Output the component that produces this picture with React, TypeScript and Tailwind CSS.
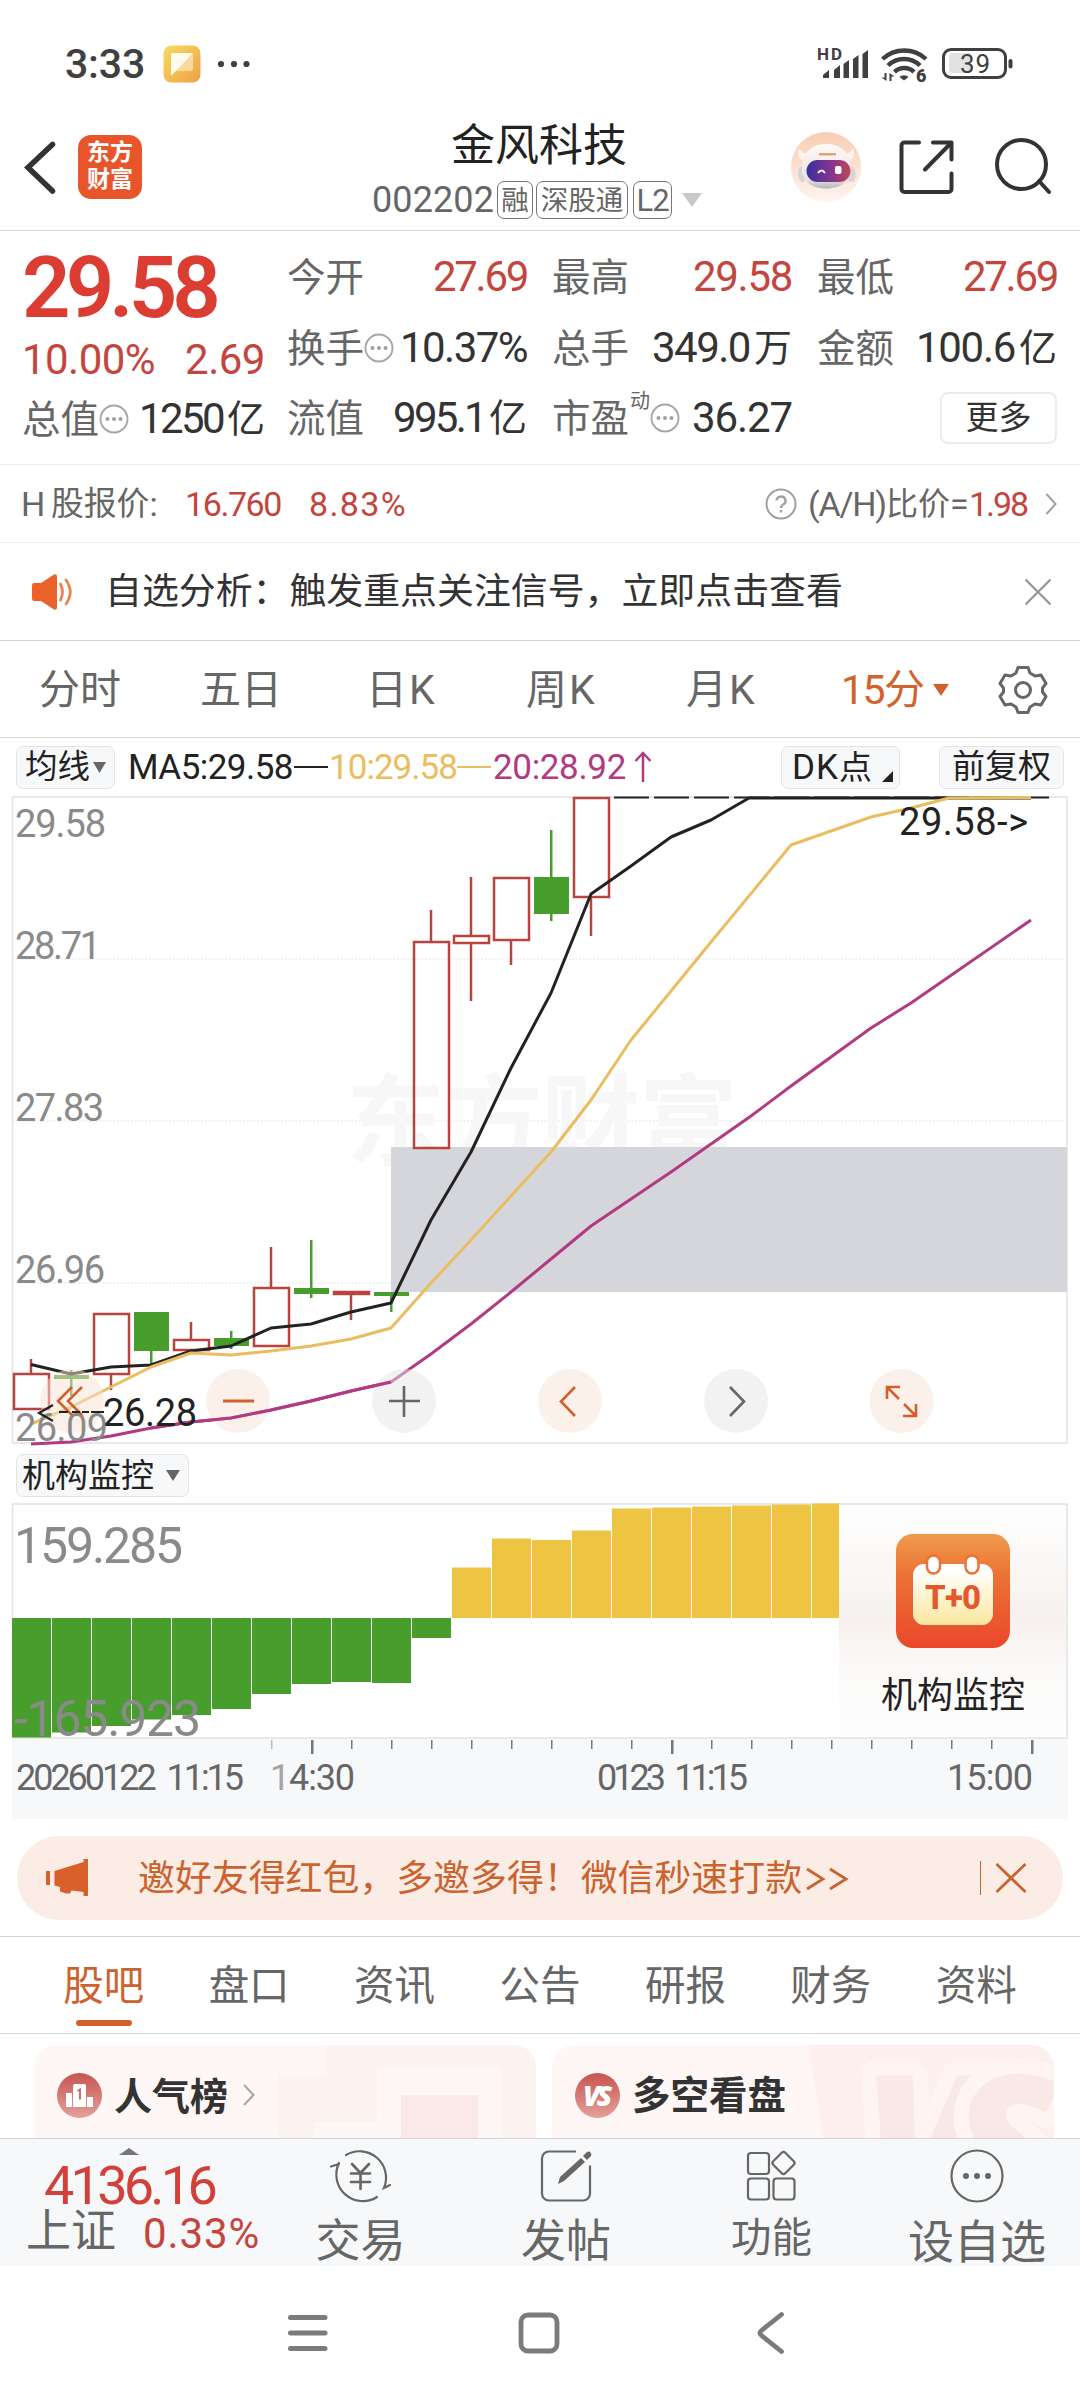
import { useLayoutEffect, useRef, useState } from "react";

type FitProps = {
    w: number,
    text: string,
    className?: string
}

// spreads or tightens the letters until the text is w pixels wide
const Fit = (props: FitProps) => {
    const ref = useRef<HTMLSpanElement>(null);
    const [spacing, setSpacing] = useState(0);

    useLayoutEffect(() => {
        if (!ref.current) return;
        const natural = ref.current.getBoundingClientRect().width;
        setSpacing((props.w - natural) / props.text.length);
    }, [])

    return (
        <span ref={ref} className={"inline-block whitespace-nowrap shrink-0 " + (props.className || "")}
            style={{ letterSpacing: spacing + "px" }}>{props.text}</span>
    );
}

type Candle = {
    x: number, high: number, top: number, bottom: number, low: number, up: boolean
}

const RED = "#b8433f";
const GREEN = "#489e2d";

const candles: Candle[] = [
    { x: 31, high: 1359, top: 1374, bottom: 1409, low: 1409, up: true },
    { x: 71, high: 1370, top: 1375, bottom: 1379, low: 1396, up: false },
    { x: 111, high: 1314, top: 1314, bottom: 1374, low: 1390, up: true },
    { x: 151, high: 1312, top: 1312, bottom: 1351, low: 1366, up: false },
    { x: 191, high: 1322, top: 1340, bottom: 1350, low: 1350, up: true },
    { x: 231, high: 1331, top: 1338, bottom: 1346, low: 1349, up: false },
    { x: 271, high: 1247, top: 1288, bottom: 1346, low: 1346, up: true },
    { x: 311, high: 1240, top: 1288, bottom: 1294, low: 1298, up: false },
    { x: 351, high: 1292, top: 1292, bottom: 1294, low: 1320, up: true },
    { x: 391, high: 1292, top: 1292, bottom: 1296, low: 1312, up: false },
    { x: 431, high: 910, top: 942, bottom: 1148, low: 1148, up: true },
    { x: 471, high: 877, top: 936, bottom: 943, low: 1001, up: true },
    { x: 511, high: 878, top: 878, bottom: 940, low: 965, up: true },
    { x: 551, high: 830, top: 877, bottom: 914, low: 921, up: false },
    { x: 591, high: 798, top: 798, bottom: 897, low: 936, up: true },
];

const ma5 = "31,1364.5 71,1374 111,1367 151,1365 191,1351 231,1346 271,1328 311,1324 351,1312 391,1303 431,1220 471,1152 511,1068 551,993 591,894 631,866 671,837 711,820 749,798 1031,798";
const ma10 = "31,1424 71,1407 111,1387 151,1367 191,1353 231,1355 271,1351 311,1346 351,1339 391,1328 431,1283 471,1240 511,1196 551,1152 591,1100 631,1040 711,942 791,845 871,817 911,808 949,798 1031,797.5";
const ma20 = "31,1444 71,1442 111,1436 151,1428 191,1422 231,1418 271,1410 311,1401 351,1391 391,1382 431,1354 471,1324 511,1292 551,1259 591,1226 671,1172 751,1116 791,1086 871,1028 911,1003 1031,920";

const greenBars = [1737.5, 1732.5, 1726, 1719.5, 1715, 1709, 1694, 1684, 1682, 1683, 1638];
const yellowBars = [1567.5, 1538.5, 1540, 1530.5, 1508.5, 1507.5, 1506.5, 1505.5, 1504.5, 1503.5];

const priceLabels = [
    { text: "29.58", y: 837, w: 89 },
    { text: "28.71", y: 959, w: 84 },
    { text: "27.83", y: 1121, w: 87 },
    { text: "26.96", y: 1283, w: 88 },
];

const More = () => (
    <svg width="30" height="30" viewBox="0 0 30 30" className="shrink-0" fill="none">
        <circle cx="15" cy="15" r="13.500" stroke="#a6a6a6" strokeWidth="1.900" />
        <circle cx="8.500" cy="15" r="2" fill="#a0a0a0" />
        <circle cx="15" cy="15" r="2" fill="#a0a0a0" />
        <circle cx="21.500" cy="15" r="2" fill="#a0a0a0" />
    </svg>
)

const StatusBar = () => (
    <div className="h-[100px] pt-[28px] pl-[65px] pr-[64px] flex">
        <div className="h-[72px] flex items-center">
            <Fit w={80} text="3:33" className="text-[41px] leading-none font-medium text-[#404040]" />
            <svg width="38" height="38" viewBox="0 0 38 38" className="ml-[18px]">
                <defs>
                    <linearGradient id="note" x1="0" y1="0" x2="1" y2="1">
                        <stop offset="0" stopColor="#f5dc60" />
                        <stop offset="1" stopColor="#f0a046" />
                    </linearGradient>
                </defs>
                <rect x="0.5" y="0.5" width="37" height="37" rx="8" fill="url(#note)" />
                <rect x="8" y="8" width="22" height="18" rx="2" fill="#f9d9a0" />
                <path d="M9 8h21L8 31V9z" fill="#fffaf0" />
            </svg>
            <svg width="34" height="10" viewBox="0 0 34 10" fill="#404040" className="ml-[15px]">
                <circle cx="5" cy="5" r="3.1" />
                <circle cx="18" cy="5" r="3.1" />
                <circle cx="30.5" cy="5" r="3.1" />
            </svg>
        </div>
        <svg width="200" height="40" viewBox="818 44 200 40" className="ml-auto mt-[16px]" fill="#404040">
            <text x="819" y="60" fontSize="17" fontWeight="700" textLength="25" fontFamily="Roboto">HD</text>
            <path d="M825 78v-3l6-5v8zM836 78v-8l6-5v13zM845.5 78v-14l5.500-4v18zM855 78v-19l5.500-4v23zM864.500 78v-24l5.500-4v28z" />
            <g fill="none" stroke="#404040" strokeWidth="4.400">
                <path d="M884.500 59a32 32 0 0 1 43.500 0" />
                <path d="M890 65.500a23 23 0 0 1 32 0" />
                <path d="M896.500 72a14 14 0 0 1 19.500 0" />
            </g>
            <path d="M901.500 77a6.500 6.500 0 0 1 9 0l-4.500 3.500z" />
            <path d="M888.500 73v8l-5-3.500h3v-4.500zM891.500 81v-8l5 3.500h-3v4.500z" />
            <text x="918" y="81.500" fontSize="18" fontWeight="900" fontFamily="Roboto">6</text>
            <rect x="945.500" y="49.500" width="62" height="28" rx="7.500" fill="none" stroke="#404040" strokeWidth="3" />
            <path d="M954 53h18v20h-18a3 3 0 0 1-3-3v-14a3 3 0 0 1 3-3z" fill="#e2e2e2" />
            <rect x="1010.500" y="59" width="4" height="9.500" rx="2" />
            <text x="962" y="73" fontSize="26" textLength="30" fontFamily="Roboto">39</text>
        </svg>
    </div>
)

const Header = () => (
    <header className="h-[131px] border-b border-[#d4d4d4] pl-[24px] flex">
        <svg width="34" height="60" viewBox="24 137 34 60" className="mt-[37px]" fill="none" stroke="#333" strokeWidth="5.500" strokeLinecap="round">
            <path d="M52.500 144.500L28 167.500l24.500 23.500" />
        </svg>
        <div className="ml-[20px] mt-[35px] w-[64px] h-[64px] rounded-[13px] bg-[#e9552a] text-white text-[23px] leading-[27px] font-bold text-center pt-[4px]">
            <div>东方</div>
            <div>财富</div>
        </div>
        <div className="ml-[230px] w-[334px]">
            <div className="h-[44px] mt-[24px] text-center text-[44px] leading-[44px] text-[#222]">金风科技</div>
            <div className="mt-[13px] h-[38px] flex items-center text-[#666]">
                <Fit w={122} text="002202" className="text-[36px] leading-none" />
                <div className="ml-[3px] w-[36px] h-[38px] border border-[#777] rounded-[7px] text-[27.500px] leading-[37px] flex justify-center">融</div>
                <div className="ml-[3px] w-[92px] h-[38px] border border-[#777] rounded-[7px] text-[27.500px] leading-[37px] flex justify-center whitespace-nowrap">深股通</div>
                <div className="ml-[5px] w-[39px] h-[38px] border border-[#777] rounded-[7px] text-[31px] leading-[37px] flex justify-center tracking-[-1px]">L2</div>
                <svg width="22" height="16" viewBox="0 0 22 16" className="ml-[9px]"><path d="M1 1h20l-10 14z" fill="#c9c9c9" /></svg>
            </div>
        </div>
        <svg width="72" height="72" viewBox="790 131 72 72" className="ml-[84px] mt-[31px]">
            <defs>
                <linearGradient id="face" x1="0" y1="0" x2="0" y2="1">
                    <stop offset="0" stopColor="#f8cdb2" />
                    <stop offset="1" stopColor="#fef5f0" />
                </linearGradient>
                <linearGradient id="visor" x1="0" y1="0" x2="1" y2="0">
                    <stop offset="0" stopColor="#3a2f9e" />
                    <stop offset="0.55" stopColor="#83358f" />
                    <stop offset="1" stopColor="#c44558" />
                </linearGradient>
                <linearGradient id="shell" x1="0" y1="0" x2="0" y2="1">
                    <stop offset="0" stopColor="#fffaf6" />
                    <stop offset="0.8" stopColor="#e9e4e4" />
                    <stop offset="1" stopColor="#b9b2b4" />
                </linearGradient>
            </defs>
            <circle cx="826" cy="167" r="35" fill="url(#face)" />
            <path d="M799 148q-3 9 3 12l9-6q-9 1-12-6zM853 148q3 9-3 12l-9-6q9 1 12-6z" fill="#fff4ee" />
            <ellipse cx="802.500" cy="174" rx="4.500" ry="8" fill="#d8d3d5" />
            <ellipse cx="851" cy="174" rx="4.500" ry="8" fill="#d8d3d5" />
            <path d="M826 144c14 0 21 7 24.500 18c4 18-9 26.500-24.500 26.500s-27-8.500-23.500-26.500c2.500-11 10-18 23.500-18z" fill="url(#shell)" />
            <rect x="806.500" y="160" width="44" height="22" rx="11" fill="url(#visor)" />
            <path d="M818 173q3.500-5 7 0" fill="none" stroke="#fff" strokeWidth="2" />
            <rect x="835" y="166" width="6.500" height="8" rx="2" fill="#fff" />
            <rect x="819" y="153" width="17" height="2.500" fill="#dba878" />
        </svg>
        <svg width="60" height="60" viewBox="898 137 60 60" className="ml-[35px] mt-[37px]" fill="none" stroke="#333" strokeWidth="4" strokeLinecap="round" strokeLinejoin="round">
            <path d="M920 142.500h-14.500a3 3 0 0 0-3 3v43.500a3 3 0 0 0 3 3h44a3 3 0 0 0 3-3v-15.500M934 142.500h18.500v17M951 144l-25 25.500" />
        </svg>
        <svg width="62" height="60" viewBox="994 137 62 60" className="ml-[36px] mt-[37px]" fill="none" stroke="#333" strokeWidth="4" strokeLinecap="round">
            <circle cx="1022.500" cy="164.500" r="24.500" />
            <path d="M1040 181l10 11" />
        </svg>
    </header>
)

const Label = ({ text }: { text: string }) => (
    <span className="relative top-[1px] text-[38.500px] leading-none text-[#666] shrink-0">{text}</span>
)

const Unit = ({ text }: { text: string }) => (
    <span className="text-[38px] leading-none ml-[4px]">{text}</span>
)

const Quote = () => (
    <section className="h-[234px] border-b border-[#ececec] flex">
        <div className="w-[265px] pl-[22px] pt-[15px]">
            <div className="h-[84px] flex items-center">
                <Fit w={194} text="29.58" className="text-[85px] leading-none font-semibold text-[#dc3d33]" />
            </div>
            <div className="h-[60px] flex items-center justify-between text-[42px] text-[#c4453e]">
                <Fit w={133} text="10.00%" className="leading-none" />
                <Fit w={80} text="2.69" className="leading-none" />
            </div>
            <div className="h-[58px] flex items-center justify-between">
                <div className="flex items-center"><Label text="总值" /><More /></div>
                <div className="flex items-center text-[#333]">
                    <Fit w={84} text="1250" className="text-[42px] leading-none" />
                    <Unit text="亿" />
                </div>
            </div>
        </div>
        <div className="ml-[22px] pt-[11px] grid grid-cols-[240px_240px_240px] gap-x-[25px] auto-rows-[70.500px] text-[42px]">
            <div className="flex items-center justify-between"><Label text="今开" /><Fit w={94} text="27.69" className="leading-none text-[#c4453e]" /></div>
            <div className="flex items-center justify-between"><Label text="最高" /><Fit w={99} text="29.58" className="leading-none text-[#c4453e]" /></div>
            <div className="flex items-center justify-between"><Label text="最低" /><Fit w={94} text="27.69" className="leading-none text-[#c4453e]" /></div>

            <div className="flex items-center justify-between">
                <div className="flex items-center"><Label text="换手" /><More /></div>
                <Fit w={127} text="10.37%" className="leading-none text-[#333]" />
            </div>
            <div className="flex items-center justify-between">
                <Label text="总手" />
                <div className="flex items-center text-[#333]"><Fit w={98} text="349.0" className="leading-none" /><Unit text="万" /></div>
            </div>
            <div className="flex items-center justify-between">
                <Label text="金额" />
                <div className="flex items-center text-[#333]"><Fit w={99} text="100.6" className="leading-none" /><Unit text="亿" /></div>
            </div>

            <div className="flex items-center justify-between">
                <Label text="流值" />
                <div className="flex items-center text-[#333]"><Fit w={92} text="995.1" className="leading-none" /><Unit text="亿" /></div>
            </div>
            <div className="flex items-center justify-between">
                <div className="flex items-center">
                    <Label text="市盈" />
                    <span className="text-[20px] leading-none mb-[34px] ml-[1px] text-[#666]">动</span>
                    <More />
                </div>
                <Fit w={100} text="36.27" className="leading-none text-[#333]" />
            </div>
            <div className="flex items-center justify-end">
                <div className="w-[117px] h-[52px] rounded-[8px] border-2 border-[#ebebee] text-[33px] leading-[47px] text-center text-[#333]">更多</div>
            </div>
        </div>
    </section>
)

const HShare = () => (
    <div className="h-[78px] border-b border-[#ececec] flex items-center pl-[21px] pr-[23px] text-[34px] leading-none text-[#666]">
        <div className="flex items-center w-[164px]"><Fit w={27} text="H" className="leading-none" /><span className="text-[32.800px] leading-none ml-[3px] mt-[1px]">股报价</span><span className="leading-none">:</span></div>
        <Fit w={96} text="16.760" className="leading-none text-[#c4453e]" />
        <Fit w={98} text="8.83%" className="leading-none text-[#c4453e] ml-[28px]" />
        <svg width="32" height="32" viewBox="0 0 32 32" fill="none" stroke="#a0a0a0" strokeWidth="2" className="ml-auto">
            <circle cx="16" cy="16" r="14.500" />
            <path d="M11.500 12.500a4.500 4.200 0 1 1 6.500 4q-2 1.200-2 3.500M16 22v2.500" strokeWidth="2.400" />
        </svg>
        <Fit w={78} text="(A/H)" className="leading-none ml-[11px]" />
        <span className="text-[32px] leading-none mt-[1px]">比价</span>
        <Fit w={18} text="=" className="leading-none" />
        <Fit w={58} text="1.98" className="leading-none text-[#c4453e] ml-[1px]" />
        <svg width="12" height="24" viewBox="0 0 12 24" fill="none" stroke="#a0a0a0" strokeWidth="2" className="ml-[18px]"><path d="M1.500 2l9 10l-9 10" /></svg>
    </div>
)

const Analysis = () => (
    <div className="h-[98px] border-b border-[#d4d4d4] flex items-center pl-[30px] pr-[28px]">
        <svg width="44" height="40" viewBox="30 571 44 40">
            <path d="M34 582h7l13-8.500q3-1 3 2v31q0 3-3 2l-13-8.500h-7q-2 0-2-3v-12q0-3 2-3z" fill="#ec622b" />
            <path d="M60.500 583q4 8 0 16M66 579q8.500 12 0 24" fill="none" stroke="#ef8152" strokeWidth="2.800" strokeLinecap="round" />
        </svg>
        <span className="ml-[31px] mt-[2px] text-[36.900px] leading-none text-[#333]">自选分析：触发重点关注信号，立即点击查看</span>
        <svg width="28" height="28" viewBox="0 0 28 28" fill="none" stroke="#999" strokeWidth="2.400" className="ml-auto"><path d="M1.500 1.500l25 25M26.500 1.500l-25 25" /></svg>
    </div>
)

const PeriodTabs = () => (
    <nav className="h-[97px] pt-[2px] border-b border-[#d4d4d4] flex items-center text-[41px] leading-none text-[#666]">
        <span className="ml-[39px] w-[161px]">分时</span>
        <span className="w-[166px]">五日</span>
        <span className="w-[160px] tracking-[2px]">日K</span>
        <span className="w-[160px] tracking-[2px]">周K</span>
        <span className="w-[155px] tracking-[2px]">月K</span>
        <span className="flex items-center text-[#d1632d]">
            <Fit w={43} text="15" className="leading-none" />分
            <svg width="16" height="12" viewBox="0 0 16 12" className="ml-[8px]"><path d="M0 0h16l-8 12z" fill="#d1602b" /></svg>
        </span>
        <svg width="52" height="54" viewBox="-26 -27 52 54" fill="none" stroke="#666" strokeWidth="3" strokeLinejoin="round" className="ml-auto mr-[31px]">
            <path d="M-5-22.500h10l2 5.500l5 3l6-1l5 8.500l-3.500 4.500v4l3.500 4.500l-5 8.500l-6-1l-5 3l-2 5.500h-10l-2-5.500l-5-3l-6 1l-5-8.500l3.500-4.500v-4l-3.500-4.500l5-8.500l6 1l5-3z" />
            <circle cx="0" cy="0" r="7.500" />
        </svg>
    </nav>
)

const MaRow = () => (
    <div className="h-[58px] flex items-center pl-[16px] pr-[16px] text-[35px] leading-none text-[#222]">
        <div className="w-[99px] h-[43px] rounded-[7px] border border-[#e3e4e8] bg-[#f7f8fa] flex items-center pl-[8px]">
            <span className="text-[32.500px] leading-none">均线</span>
            <svg width="13" height="11" viewBox="0 0 13 11" className="ml-[3px]"><path d="M0 0h13l-6.500 11z" fill="#666" /></svg>
        </div>
        <Fit w={165} text="MA5:29.58" className="leading-none ml-[13px]" />
        <div className="w-[34px] h-[2.500px] bg-[#222] ml-[1px]" />
        <Fit w={128} text="10:29.58" className="leading-none ml-[1px] text-[#e9bd60]" />
        <div className="w-[34px] h-[2.500px] bg-[#e9bd60]" />
        <Fit w={133} text="20:28.92" className="leading-none ml-[2px] text-[#b23a80]" />
        <svg width="18" height="32" viewBox="0 0 18 32" fill="none" stroke="#b23a80" strokeWidth="2.500" className="ml-[8px]"><path d="M9 31v-29M1.500 10l7.500-8l7.500 8" /></svg>
        <div className="ml-auto w-[119px] h-[43px] rounded-[7px] border border-[#e3e4e8] bg-[#f7f8fa] flex items-center pl-[10px]">
            <Fit w={47} text="DK" className="leading-none" /><span className="text-[33px] leading-none">点</span>
            <svg width="11" height="11" viewBox="0 0 11 11" className="ml-[10px] mt-[18px]"><path d="M11 0v11h-11z" fill="#222" /></svg>
        </div>
        <div className="ml-[39px] w-[125px] h-[43px] rounded-[7px] border border-[#e3e4e8] bg-[#f7f8fa] text-[33px] leading-[39px] text-center">前复权</div>
    </div>
)

const PriceChart = () => (
    <svg width="1080" height="650" viewBox="0 796 1080 650" className="block" fontFamily="Roboto, 'Noto Sans CJK SC', sans-serif">
        <g stroke="#e2e2e4" fill="none">
            <rect x="12.500" y="797" width="1054.500" height="646" strokeWidth="1.500" />
            <path d="M12 959h1055M12 1121h1055M12 1283h1055" stroke="#e4e4e4" strokeDasharray="2 1.500" />
        </g>
        <text x="346" y="1157" fontSize="99" fontWeight="700" fill="#f7f7f7" textLength="392">东方财富</text>
        <rect x="391" y="1147" width="676" height="145" fill="#d5d6db" />
        <g fontSize="38" fill="#8a8a8a">
            {priceLabels.map((l) => (
                <text key={l.text} x="15" y={l.y} textLength={l.w + 2}>{l.text}</text>
            ))}
        </g>
        {candles.map((c) => c.up ? (
            <g key={c.x} stroke={RED} strokeWidth="2.500" fill="none">
                <path d={`M${c.x} ${c.high}V${c.top}M${c.x} ${c.bottom}V${c.low}`} />
                <rect x={c.x - 17} y={c.top} width="35" height={c.bottom - c.top} />
            </g>
        ) : (
            <g key={c.x} fill={GREEN}>
                <rect x={c.x - 1} y={c.high} width="2.500" height={c.low - c.high} />
                <rect x={c.x - 17} y={c.top} width="35" height={c.bottom - c.top} />
            </g>
        ))}
        <path d="M614 797.500H1049" stroke="#222" strokeWidth="2" strokeDasharray="35 5" />
        <g fill="none" strokeWidth="3" strokeLinejoin="round">
            <polyline points={ma5} stroke="#222" />
            <polyline points={ma10} stroke="#e9bd60" />
            <polyline points={ma20} stroke="#b23a80" />
        </g>
        <text x="899" y="835" fontSize="38" fill="#222" textLength="129">29.58-&gt;</text>

        <g fill="#f9e3d6" fillOpacity="0.5">
            <circle cx="72" cy="1401" r="32" />
            <circle cx="238" cy="1401" r="32" />
            <circle cx="570" cy="1401" r="32" />
            <circle cx="901.500" cy="1401" r="32" />
        </g>
        <circle cx="404" cy="1401" r="32" fill="#e6e6e8" fillOpacity="0.5" />
        <circle cx="736" cy="1401" r="32" fill="#e6e6e8" fillOpacity="0.5" />
        <polyline points="151,1428 191,1422 231,1418 271,1410 311,1401 351,1391 391,1382" fill="none" stroke="#b23a80" strokeWidth="3" />
        <text x="15" y="1441" fontSize="38" fill="#8a8a8a" textLength="93">26.09</text>
        <g fill="none" stroke="#d1602b" strokeWidth="2.600">
            <path d="M72 1387l-14 14l14 14M82 1387l-14 14l14 14" />
            <path d="M223 1401h31" strokeWidth="3" />
            <path d="M575 1387l-14 14.500l14 14.500" />
            <path d="M887 1399v-12h13M888 1388l11 11M916 1404v12h-13M915 1415l-11-11" />
        </g>
        <g fill="none" stroke="#666" strokeWidth="2.600">
            <path d="M389 1401h31M404 1386v31" />
            <path d="M730 1387l14 14.500l-14 14.500" />
        </g>
        <path d="M53 1405l-14 8l14 8M59 1412h9M72 1412h8M82 1412h7M91 1412h13" fill="none" stroke="#222" strokeWidth="2.200" />
        <text x="103" y="1426" fontSize="38" fill="#222" textLength="94">26.28</text>
    </svg>
)

const MonitorButton = () => (
    <div className="h-[57px] pt-[8px] pl-[16px]">
        <div className="w-[173px] h-[43px] rounded-[7px] border border-[#e3e4e8] bg-[#f7f8fa] flex items-center pl-[5px] text-[33px] leading-none text-[#222]">
            <span className="leading-none">机构监控</span>
            <svg width="14" height="11" viewBox="0 0 14 11" className="ml-[12px]"><path d="M0 0h14l-7 11z" fill="#666" /></svg>
        </div>
    </div>
)

const MonitorChart = () => (
    <svg width="1080" height="318" viewBox="0 1503 1080 318" className="block" fontFamily="Roboto, 'Noto Sans CJK SC', sans-serif">
        <defs>
            <linearGradient id="tile" x1="0" y1="0" x2="0" y2="1">
                <stop offset="0" stopColor="#f09a4c" />
                <stop offset="0.35" stopColor="#ec7334" />
                <stop offset="1" stopColor="#ea472b" />
            </linearGradient>
            <linearGradient id="page" x1="0" y1="0" x2="0" y2="1">
                <stop offset="0.100" stopColor="#fff" />
                <stop offset="1" stopColor="#fbe79d" />
            </linearGradient>
            <linearGradient id="side" x1="0" y1="0" x2="0" y2="1">
                <stop offset="0" stopColor="#fff" />
                <stop offset="0.500" stopColor="#f6f1ee" />
                <stop offset="0.750" stopColor="#fcfbfa" />
                <stop offset="1" stopColor="#fdfdfd" />
            </linearGradient>
        </defs>
        <rect x="12" y="1739" width="1056" height="80" fill="#f7f8fa" />
        <rect x="839" y="1505" width="228" height="232" fill="url(#side)" />
        <rect x="12.500" y="1504" width="1054.500" height="234" fill="none" stroke="#e2e2e4" strokeWidth="1.500" />
        <g fill={GREEN}>
            {greenBars.map((b, i) => (
                <rect key={i} x={12 + i * 40} y="1618" width="39" height={b - 1618} />
            ))}
        </g>
        <g fill="#eec443">
            {yellowBars.map((b, i) => (
                <rect key={i} x={452 + i * 40} y={b} width={i == 9 ? 27 : 39} height={1618 - b} />
            ))}
        </g>
        <g fontSize="50" fill="#8a8a8a">
            <text x="14" y="1563" textLength="169">159.285</text>
            <text x="14" y="1736" textLength="187">-165.923</text>
        </g>
        {Array.from({ length: 20 }, (_, i) => 271 + i * 40).map((x) => (
            <rect key={x} x={x} y="1740" width={x == 311 || x == 671 || x == 1031 ? 2.5 : 1.5} height={x == 311 || x == 671 || x == 1031 ? 14 : 9} fill={x == 271 ? "#bbb" : "#777"} />
        ))}
        <g fontSize="36" fill="#666">
            <text x="16" y="1790" textLength="228" className="[word-spacing:7px]">20260122 11:15</text>
            <text x="270" y="1790" textLength="85"><tspan fill="#a4a4a4">1</tspan>4:30</text>
            <text x="597" y="1790" textLength="151" className="[word-spacing:7px]">0123 11:15</text>
            <text x="947" y="1790" textLength="86">15:00</text>
        </g>
        <rect x="896" y="1534" width="114" height="114" rx="17" fill="url(#tile)" />
        <rect x="913" y="1564" width="80" height="61" rx="11" fill="url(#page)" />
        <g fill="#fff" stroke="#ec7334" strokeWidth="2.500">
            <rect x="927" y="1555.500" width="13" height="18" rx="6.500" />
            <rect x="965.500" y="1555.500" width="13" height="18" rx="6.500" />
        </g>
        <text x="925" y="1609" fontSize="33" fontWeight="800" fill="#e2592d" textLength="56">T+0</text>
        <text x="881" y="1708" fontSize="36" fill="#222" textLength="144">机构监控</text>
    </svg>
)

const Banner = () => (
    <div className="mt-[15px] mx-[17px] h-[84px] rounded-[42px] bg-[#fbede5] flex items-center pl-[27px] pr-[36px] text-[#cb632f]">
        <svg width="46" height="40" viewBox="43 1858 46 40" fill="#d9602a">
            <path d="M45 1871h4v14h-4zM53.500 1871l29-9v-3h4.500v37h-4.500v-4l-12-1.500l-1.500 3h-4l-6-2v-4.500l-5.500-1.500z" />
        </svg>
        <span className="ml-[48px] mt-[2px] text-[36.900px] leading-none">邀好友得红包，多邀多得！微信秒速打款</span>
        <svg width="44" height="24" viewBox="0 0 44 24" fill="none" stroke="#cb632f" strokeWidth="2.800" className="ml-[3px] mt-[2px]"><path d="M2 2l16 10l-16 10M25 2l16 10l-16 10" /></svg>
        <div className="ml-auto w-[1.500px] h-[34px] bg-[#cb632f]" />
        <svg width="32" height="30" viewBox="0 0 32 30" fill="none" stroke="#cb632f" strokeWidth="2.800" className="ml-[14px] mb-[1px]"><path d="M1.500 1l29 28M30.500 1l-29 28" /></svg>
    </div>
)

const sections = ["股吧", "盘口", "资讯", "公告", "研报", "财务", "资料"];

const SectionTabs = () => (
    <nav className="mt-[16px] h-[98px] border-y border-[#d4d4d4] grid grid-cols-7 px-[31px] text-[40.500px] leading-none">
        {sections.map((s, i) => (
            <div key={s} className={i == 0 ? "flex flex-col items-center pt-[29px] text-[#cb632f]" : "flex flex-col items-center pt-[29px] text-[#666]"}>
                {s}
                {i == 0 && <div className="mt-[13px] w-[56px] h-[6px] rounded-[3px] bg-[#d2602d]" />}
            </div>
        ))}
    </nav>
)

const Cards = () => (
    <div className="h-[104px] pt-[11px] pl-[34px] flex gap-[16px] overflow-hidden">
        <div className="relative w-[502px] shrink-0 h-[120px] rounded-[22px] bg-[#fef7f5] overflow-hidden">
            <svg width="502" height="120" viewBox="34 2045 502 120" className="absolute inset-0">
                <path d="M278 2165v-90h48v-30h210v120z" fill="#fcf2f0" />
                <path d="M314 2165v-43h63v43z" fill="#fdf7f5" />
                <path d="M377 2068h124v97h-124z" fill="#fef6f4" />
                <path d="M401 2095h77v70h-77z" fill="#fae9e8" />
                <defs>
                    <linearGradient id="badge" x1="0" y1="0" x2="0" y2="1">
                        <stop offset="0" stopColor="#c75550" />
                        <stop offset="1" stopColor="#e5a09a" />
                    </linearGradient>
                </defs>
                <circle cx="79.500" cy="2095.500" r="22.500" fill="url(#badge)" />
                <path d="M66 2093h6v14h-6zM73 2086q0-2 2-2h9q2 0 2 2v21h-13zM87 2097h6v10h-6z" fill="#fff" />
                <path d="M77.500 2091l2.500-1.500v10" fill="none" stroke="#cf6d67" strokeWidth="2" />
            </svg>
            <div className="relative h-[103px] pl-[80px] flex items-center">
                <span className="text-[38px] leading-none font-bold text-[#333]">人气榜</span>
                <svg width="14" height="22" viewBox="0 0 14 22" fill="none" stroke="#aaa" strokeWidth="2.200" className="ml-[14px] mb-[3px]"><path d="M2 1l9.500 10l-9.500 10" /></svg>
            </div>
        </div>
        <div className="relative w-[502px] shrink-0 h-[120px] rounded-[22px] bg-[#fef7f5] overflow-hidden">
            <svg width="502" height="120" viewBox="552 2045 502 120" className="absolute inset-0" fontFamily="'Open Sans', sans-serif">
                <path d="M809 2045h245v120h-227z" fill="#fcefee" />
                <text x="862" y="2215" fontSize="195" fontWeight="800" fontStyle="italic" fill="#fae8e7" stroke="#fef5f3" strokeWidth="30" paintOrder="stroke" strokeLinejoin="round" textLength="195">VS</text>
                <circle cx="597.500" cy="2095.500" r="22.500" fill="url(#badge)" />
                <text x="583" y="2106" fontSize="28" fontWeight="800" fontStyle="italic" fill="#fff" textLength="29">VS</text>
            </svg>
            <div className="relative h-[103px] pl-[80px] flex items-center">
                <span className="text-[38.500px] leading-none font-bold text-[#333]">多空看盘</span>
            </div>
        </div>
    </div>
)

const BottomBar = () => (
    <div className="h-[128px] border-t border-[#d4d4d8] bg-[#f7f8fa] flex text-[#666] leading-none">
        <div className="w-[258px]">
            <svg width="20" height="7" viewBox="0 0 20 7" className="ml-[119px] mt-[9px]"><path d="M0 7l10-7l10 7z" fill="#77777b" /></svg>
            <div className="ml-[44px] mt-[4px] h-[54px]"><Fit w={170} text="4136.16" className="text-[54px] leading-[54px] text-[#d24139]" /></div>
            <div className="mt-[-4px] ml-[26px] flex">
                <span className="text-[45px] leading-[45px] whitespace-nowrap">上证</span>
                <Fit w={117} text="0.33%" className="text-[42px] leading-[42px] ml-[27px] mt-[4px] text-[#c4453e]" />
            </div>
        </div>
        <div className="w-[205px] flex flex-col items-center pt-[7px]">
            <svg width="64" height="60" viewBox="329 2147 64 60" fill="none" stroke="#666" strokeWidth="2.200" strokeLinecap="round">
                <path d="M346 2156a26.500 26.500 0 0 1 38 33l6-3M339 2165l-8 2.500M339 2164a26.500 26.500 0 0 0 38 34" />
                <path d="M352 2165l8.500 9l8.500-9M351 2174.500h19M351 2183h19M360.500 2174v16" strokeWidth="2.600" />
            </svg>
            <span className="mt-[13px] text-[45px] leading-[46px]">交易</span>
        </div>
        <div className="w-[206px] flex flex-col items-center pt-[7px]">
            <svg width="60" height="60" viewBox="536 2147 60 60" fill="none" stroke="#666" strokeWidth="2.200">
                <path d="M576 2152.500h-27a7 7 0 0 0-7 7v35a7 7 0 0 0 7 7h34a7 7 0 0 0 7-7v-28" />
                <path d="M558 2185l2-7l21-19l4 4l-21 19zM583 2157l4-4q2-1 3.500 .5t.5 3.500l-4 4z" fill="#666" stroke="none" />
            </svg>
            <span className="mt-[13px] text-[45px] leading-[46px]">发帖</span>
        </div>
        <div className="w-[205px] flex flex-col items-center pt-[7px]">
            <svg width="60" height="60" viewBox="742 2147 60 60" fill="none" stroke="#666" strokeWidth="2.200">
                <rect x="748" y="2154" width="21" height="21" rx="3" />
                <rect x="748" y="2179.500" width="21" height="21" rx="3" />
                <rect x="773.500" y="2179.500" width="21" height="21" rx="3" />
                <rect x="775" y="2155.500" width="17" height="17" rx="2.500" transform="rotate(45 783.500 2164)" />
            </svg>
            <span className="mt-[12px] text-[40.500px] leading-[41px]">功能</span>
        </div>
        <div className="w-[206px] flex flex-col items-center pt-[7px]">
            <svg width="60" height="60" viewBox="947 2147 60 60" fill="#666">
                <circle cx="977" cy="2177" r="25.500" fill="none" stroke="#666" strokeWidth="2.200" />
                <circle cx="966" cy="2177" r="3" />
                <circle cx="977" cy="2177" r="3" />
                <circle cx="988" cy="2177" r="3" />
            </svg>
            <span className="mt-[13px] text-[46px] leading-[46px]">设自选</span>
        </div>
    </div>
)

const SystemNav = () => (
    <div className="h-[133px] flex items-center pl-[286px]">
        <svg width="44" height="44" viewBox="0 0 44 44" fill="none" stroke="#7b7b7b" strokeWidth="5" strokeLinecap="round"><path d="M4.500 6.500h34.500M4.500 22h34.500M4.500 37.500h34.500" /></svg>
        <svg width="44" height="44" viewBox="0 0 44 44" fill="none" stroke="#7b7b7b" strokeWidth="4.800" className="ml-[187px]"><rect x="4" y="4" width="36" height="36" rx="7" /></svg>
        <svg width="44" height="44" viewBox="0 0 44 44" fill="none" stroke="#7b7b7b" strokeWidth="4.800" strokeLinecap="round" className="ml-[187px]"><path d="M33.500 3.500l-20 16q-3 2.500 0 5l20 16" /></svg>
    </div>
)

const App = () => {
    return (
        <div className="w-[1080px] h-[2400px] bg-white overflow-hidden font-['Roboto','Noto_Sans_CJK_SC',sans-serif]">
            <StatusBar />
            <Header />
            <Quote />
            <HShare />
            <Analysis />
            <PeriodTabs />
            <MaRow />
            <PriceChart />
            <MonitorButton />
            <MonitorChart />
            <Banner />
            <SectionTabs />
            <Cards />
            <BottomBar />
            <SystemNav />
        </div>
    );
}

export default App;
